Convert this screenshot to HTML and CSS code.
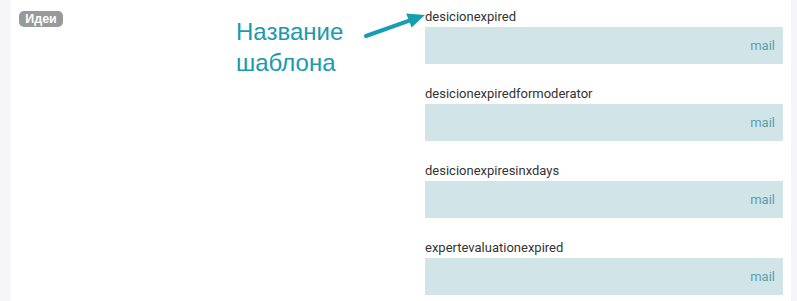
FILE: index.html
```html
<!DOCTYPE html>
<html lang="ru">
<head>
    <meta charset="UTF-8">
    <meta name="viewport" content="width=device-width, initial-scale=1.0">
    <title>Шаблоны</title>
    <link rel="stylesheet" href="styles.css">
</head>
<body>
    <div id="page">
        <div class="sideStrip"></div>
        <div id="main">
            <!-- Section badge -->
            <div class="badgeCol">
                <span class="badge">Идеи</span>
            </div>

            <!-- Template list -->
            <div class="templates">
                <div class="tplRow">
                    <div class="tplName">desicionexpired</div>
                    <div class="tplBox">mail</div>
                </div>
                <div class="tplRow">
                    <div class="tplName">desicionexpiredformoderator</div>
                    <div class="tplBox">mail</div>
                </div>
                <div class="tplRow">
                    <div class="tplName">desicionexpiresinxdays</div>
                    <div class="tplBox">mail</div>
                </div>
                <div class="tplRow">
                    <div class="tplName">expertevaluationexpired</div>
                    <div class="tplBox">mail</div>
                </div>
            </div>

            <!-- Annotation over the page -->
            <div class="note">Название<br>шаблона</div>
            <svg class="noteArrow" width="70" height="35" viewBox="0 0 70 35">
                <line x1="6" y1="28" x2="50" y2="12.4" stroke="#179db1" stroke-width="4" stroke-linecap="round"/>
                <polygon points="65,7 51.6,19.4 46.2,5.4" fill="#179db1"/>
            </svg>
        </div>
        <div class="sideStrip right"></div>
    </div>
</body>
</html>
```

FILE: styles.css
```css
* {
    box-sizing: border-box;
}
html, body {
    margin: 0;
    padding: 0;
}
body {
    background-color: #fff;
    font-family: Roboto, "Liberation Sans", Arial, sans-serif;
    color: #333;
}

#page {
    display: flex;
    min-height: 100vh;
}
.sideStrip {
    width: 11px;
    background-color: #f6f5f8;
}
.sideStrip.right {
    width: 6px;
}

#main {
    flex: 1;
    display: flex;
    position: relative;
    background-color: #fff;
}

.badgeCol {
    width: 414px;
    padding: 8px 0 0 8px;
}
.badge {
    display: inline-block;
    width: 44px;
    height: 16px;
    line-height: 16px;
    border-radius: 5px;
    background-color: #999;
    color: #fff;
    font-family: "Liberation Sans", Arial, sans-serif;
    font-weight: bold;
    font-size: 12.5px;
    text-align: center;
}

.templates {
    flex: 1;
    padding: 8px 8px 0 0;
}
.tplRow {
    margin-bottom: 21px;
}
.tplName {
    font-size: 13px;
    line-height: 17px;
    color: #333;
}
.tplBox {
    margin-top: 2px;
    height: 37px;
    display: flex;
    align-items: center;
    justify-content: flex-end;
    padding-right: 8px;
    background-color: #d1e5e8;
    color: #5f9ea5;
    font-size: 13px;
}

.note {
    position: absolute;
    left: 225px;
    top: 16px;
    font-family: "Liberation Sans", Arial, sans-serif;
    font-size: 24px;
    line-height: 31px;
    color: #1a9aae;
}
.noteArrow {
    position: absolute;
    left: 349px;
    top: 8px;
}
```
